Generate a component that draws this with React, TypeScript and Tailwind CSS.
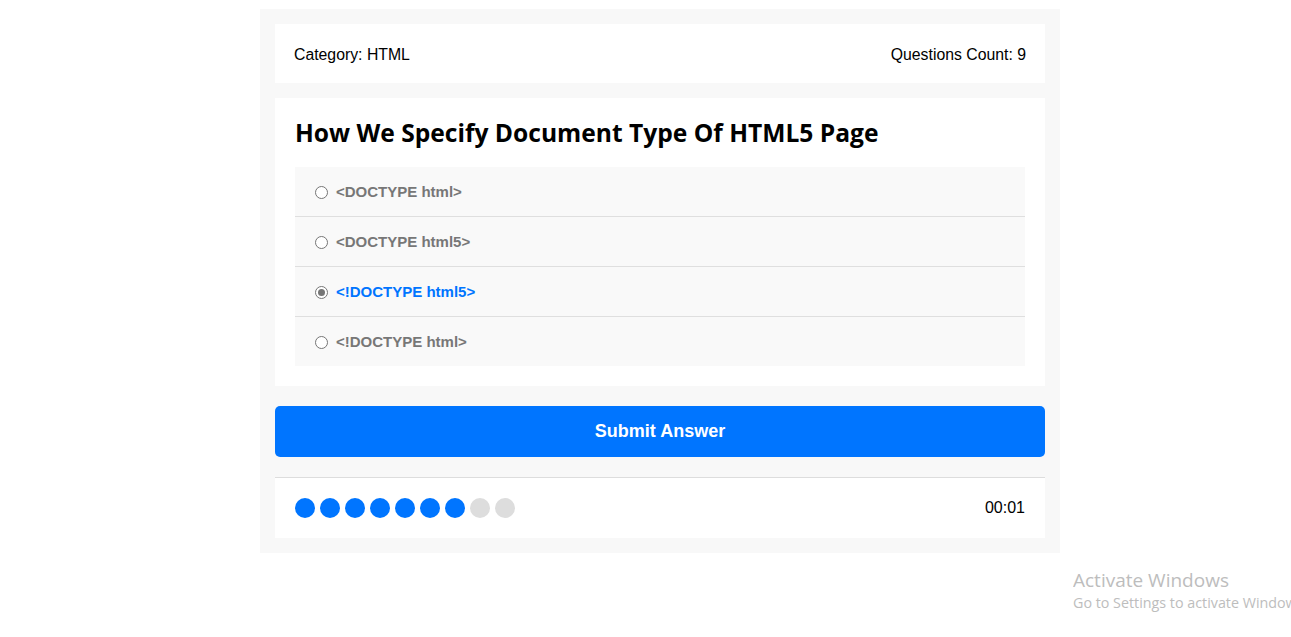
import React from "react";

const options = [
  { text: "<DOCTYPE html>", checked: false },
  { text: "<DOCTYPE html5>", checked: false },
  { text: "<!DOCTYPE html5>", checked: true },
  { text: "<!DOCTYPE html>", checked: false },
];

export default function App() {
  const bullets = [1, 1, 1, 1, 1, 1, 1, 0, 0];
  return (
    <div className="relative min-h-[637px] overflow-hidden bg-white pt-[9px]" style={{ fontFamily: "'Liberation Sans', Arial, sans-serif" }}>
      <div className="ml-[260px] w-[800px] bg-[#f8f8f8] p-[15px]">
        <div className="flex h-[59px] items-center justify-between bg-white px-[19px] pt-[2px] text-[15.8px] text-black">
          <span>Category: HTML</span>
          <span>Questions Count: 9</span>
        </div>
        <div className="mt-[15px] bg-white p-[20px]">
          <h2 className="mb-[20px] text-[24.6px] font-bold leading-[29px] text-black" style={{ fontFamily: "'Open Sans', sans-serif" }}>
            How We Specify Document Type Of HTML5 Page
          </h2>
          <div className="bg-[#f9f9f9]">
            {options.map((o, i) => (
              <div
                key={i}
                className={`flex items-center gap-[8px] pl-[20px] pt-[1px] ${i < options.length - 1 ? "h-[50px] border-b border-[#dfdfdf]" : "h-[49px]"}`}
              >
                <span className="flex h-[13px] w-[13px] items-center justify-center rounded-full border border-[#767676] bg-white">
                  {o.checked && <span className="h-[7px] w-[7px] rounded-full bg-[#767676]" />}
                </span>
                <span className={`text-[15px] font-bold ${o.checked ? "text-[#0075ff]" : "text-[#777]"}`}>
                  {o.text}
                </span>
              </div>
            ))}
          </div>
        </div>
        <button className="mt-[20px] flex h-[51px] w-full items-center justify-center rounded-[5px] bg-[#0075ff] text-[18px] font-bold text-white">
          Submit Answer
        </button>
        <div className="mt-[20px] flex h-[61px] items-center justify-between border-t border-[#dddddd] bg-white px-[20px]">
          <div className="flex gap-[5px]">
            {bullets.map((b, i) => (
              <span key={i} className={`h-[20px] w-[20px] rounded-full ${b ? "bg-[#0075ff]" : "bg-[#dddddd]"}`} />
            ))}
          </div>
          <span className="text-[16px] text-black">00:01</span>
        </div>
      </div>
      <div className="absolute left-[1073px] top-[567px] w-[218px] overflow-hidden whitespace-nowrap text-[#bdbdbd]" style={{ fontFamily: "'Open Sans', sans-serif" }}>
        <div className="text-[19px] leading-[26px]">Activate Windows</div>
        <div className="text-[14.3px] leading-[20px]">Go to Settings to activate Windows.</div>
      </div>
    </div>
  );
}
